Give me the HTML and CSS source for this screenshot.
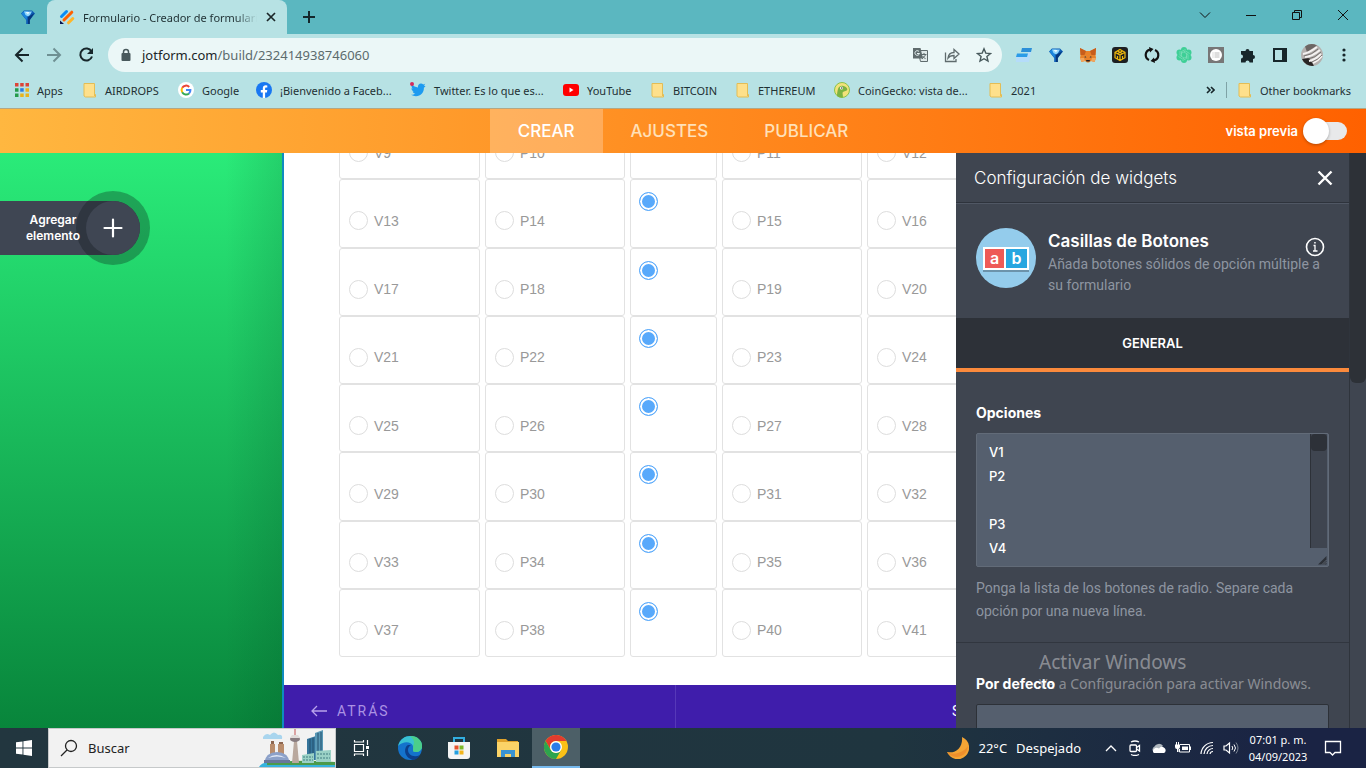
FILE: index.html
```html
<!DOCTYPE html>
<html lang="es">
<head>
  <meta charset="UTF-8">
  <meta name="viewport" content="width=device-width, initial-scale=1.0">
  <title>Formulario - Creador de formularios</title>
  <link rel="stylesheet" href="styles.css">
</head>
<body>
  <svg class="defs" width="0" height="0">
    <symbol id="folder" viewBox="0 0 14 16"><path d="M1 1.500h10.500v10l1 1v2.500H2.500L1 14z" fill="#fee08b" stroke="#e3bd55"/><path d="M11.500 11v3" stroke="#e3bd55"/></symbol>
    <symbol id="gem" viewBox="0 0 16 16">
      <path d="M1 4.500 4 1.500h8l3 3L9.800 11v4H6.200v-4z" fill="#0d5db5"/>
      <path d="M1.500 4.500 4.500 2H8L6.500 11z" fill="#1c86dd"/><path d="M4 2.500h8L10 6 8 7.500 5.500 6z" fill="#8fd6fb"/><path d="M5.500 3h4L8 5.500z" fill="#e6f8ff"/><path d="M8 8l6.500-4L9.800 11v4H8z" fill="#06387c"/>
    </symbol>
  </svg>

  <div class="tabstrip">
    <button class="pinned" aria-label="Pestaña fijada"><svg width="16" height="16"><use href="#gem"/></svg></button>
    <div class="tab">
      <svg width="16" height="16" viewBox="0 0 16 16" stroke-width="3" stroke-linecap="round">
        <path d="M2.500 7.500 7.500 2.500" stroke="#0a8cf5"/>
        <path d="M5 11 12.800 3.200" stroke="#ff6100"/><path d="M9.500 13.800 13.800 9.500" stroke="#ffb629"/>
        <path d="M1 11.500v3.500h4z" fill="#0a1551"/>
      </svg>
      <span class="tab-title">Formulario - Creador de formularios</span>
      <button aria-label="Cerrar pestaña"><svg width="10" height="10" viewBox="0 0 10 10"><path d="M1 1l8 8M9 1l-8 8" stroke="#1b2628" stroke-width="1.700"/></svg></button>
    </div>
    <button class="new-tab" aria-label="Nueva pestaña"><svg width="14" height="14" viewBox="0 0 14 14"><path d="M7 1v12M1 7h12" stroke="#14282c" stroke-width="2"/></svg></button>
    <div class="window-buttons">
      <button aria-label="Buscar pestañas"><svg width="12" height="12" viewBox="0 0 12 12"><path d="M1 3.500l5 5 5-5" fill="none" stroke="#111"/></svg></button>
      <button aria-label="Minimizar"><svg width="12" height="12" viewBox="0 0 12 12"><path d="M1 6.500h10" stroke="#111"/></svg></button>
      <button aria-label="Restaurar"><svg width="12" height="12" viewBox="0 0 12 12"><path d="M1.500 3.500h7v7h-7zM3.500 3.500v-2h7v7h-2" fill="none" stroke="#111"/></svg></button>
      <button aria-label="Cerrar"><svg width="12" height="12" viewBox="0 0 12 12"><path d="M1 1l10 10M11 1L1 11" stroke="#111"/></svg></button>
    </div>
  </div>

  <div class="toolbar">
    <div class="nav-buttons">
      <button aria-label="Atrás"><svg width="16" height="16" viewBox="0 0 16 16"><path d="M15 8H2M8.500 1.500 2 8l6.500 6.500" fill="none" stroke="#17262a" stroke-width="2"/></svg></button>
      <button aria-label="Adelante"><svg width="16" height="16" viewBox="0 0 16 16"><path d="M1 8h13M7.500 1.500 14 8l-6.500 6.500" fill="none" stroke="#6f9093" stroke-width="2"/></svg></button>
      <button aria-label="Recargar"><svg width="16" height="16" viewBox="0 0 16 16"><path d="M13.500 4.500A6 6 0 1 0 14 9.500" fill="none" stroke="#17262a" stroke-width="2"/><path d="M15 1v6H9z" fill="#17262a"/></svg></button>
    </div>
    <div class="omnibox">
      <svg width="12" height="14" viewBox="0 0 12 14"><rect x="1.500" y="5" width="9" height="8" rx="1" fill="#48595c"/><path d="M3.500 5.500V4a2.500 2.500 0 0 1 5 0v1.500" fill="none" stroke="#48595c" stroke-width="1.500"/></svg>
      <span class="url"><b>jotform.com</b>/build/232414938746060</span>
      <button aria-label="Traducir"><svg width="16" height="16" viewBox="0 0 16 16"><path d="M6 3.500h9.500v11h-7z" fill="#dfe9e9" stroke="#5f6b6d"/><path d="M1 1h7.500l2.500 10.500H1z" fill="#5f6b6d"/><path d="M7 4.500A2.300 2.300 0 1 0 7.500 6.500H5" fill="none" stroke="#eaf6f6"/><path d="M9.500 7.500h5M12 6v1.500M13.500 8l-3.500 4M10.500 9l3 3" stroke="#5f6b6d"/></svg></button>
      <button aria-label="Compartir"><svg width="16" height="16" viewBox="0 0 16 16" fill="none" stroke="#5f6b6d" stroke-width="1.300"><path d="M1.500 5.500v9h10.500v-2.500"/><path d="M4 11c.5-4 3-5.500 6-5.500V2.500L15 7l-5 4.500V8.500C7.500 8.500 5.500 9 4 11z"/></svg></button>
      <button aria-label="Favoritos"><svg width="16" height="16" viewBox="0 0 16 16"><path d="M8 1.800l1.800 4.300 4.700.4-3.600 3 1.100 4.600L8 11.700 4 14.100l1.100-4.600-3.600-3 4.700-.4z" fill="none" stroke="#48595c" stroke-width="1.400"/></svg></button>
    </div>
    <div class="extensions">
      <button aria-label="Lector"><svg width="16" height="16" viewBox="0 0 16 16"><path d="M0 10h11l1-5h3l-2 10H0z" fill="#b5dcfa"/><path d="M6 1h10l-1 4H5z" fill="#2b8fd9"/><path d="M1 6.500h11l-1 3.500H0z" fill="#2b9be8"/></svg></button>
      <button aria-label="Gema"><svg width="16" height="16"><use href="#gem"/></svg></button>
      <button aria-label="Billetera"><svg width="18" height="16" viewBox="0 0 18 16"><path d="M1 1l6 3h4l6-3-.5 7 .5 3-1.500 4-3.500-1-2 1.500H8L6 14l-3.500 1L1 11l.5-3z" fill="#e8822a"/><path d="M1 1l6 3-1.500 4h-4zM17 1l-6 3 1.500 4h4z" fill="#c75d1c"/><path d="M6 9l1.500 1.500H5.500zM12 9l-1.500 1.500h2z" fill="#2b3440"/><path d="M7 13h4l-.5 1.500h-3z" fill="#2b2020"/><path d="M1 11l4 0 1 3-3.500 1zM17 11l-4 0-1 3 3.500 1z" fill="#f2a55c"/></svg></button>
      <button aria-label="Cadena"><svg width="16" height="16" viewBox="0 0 16 16"><rect width="16" height="16" rx="3" fill="#1d1f22"/><path d="M8 2.500l5 2.800v5.400l-5 2.800-5-2.800V5.300zM3 5.300l5 2.700 5-2.700M8 8v5.500M5.500 4l5 2.700M10.500 4l-5 2.700M5.500 9v3M10.500 9v3" fill="none" stroke="#efb90b" stroke-width="1.200"/></svg></button>
      <button aria-label="Sincronizar"><svg width="16" height="16" viewBox="0 0 16 16"><path d="M5 13A5.500 5.500 0 0 1 6 2.600M11 3a5.500 5.500 0 0 1-1 10.400" fill="none" stroke="#111" stroke-width="2.200"/><path d="M5 0l4.500 2L6 5.500zM11 16l-4.500-2 3.500-3.500z" fill="#111"/></svg></button>
      <button aria-label="Asistente"><svg width="16" height="16" viewBox="0 0 16 16"><g fill="#3ecf96"><circle cx="8" cy="8" r="6"/><circle cx="8" cy="3" r="3"/><circle cx="12.500" cy="5.500" r="3"/><circle cx="12.500" cy="10.500" r="3"/><circle cx="8" cy="13" r="3"/><circle cx="3.500" cy="10.500" r="3"/><circle cx="3.500" cy="5.500" r="3"/></g><path d="M5.500 9.500v-5l4-2M5 6.500 9.500 4l4 2.500M8 5l4 2.500v5M10.500 6.500v5l-4 2M11 9.500 6.500 12l-4-2.500M8 11 4 8.500V4" fill="none" stroke="#8fe3c2" stroke-width=".6"/></svg></button>
      <button aria-label="Lista"><svg width="16" height="16" viewBox="0 0 16 16"><rect width="16" height="16" fill="#777"/><circle cx="8" cy="8" r="6" fill="#fff"/><path d="M4.500 6h1M6.500 6h5M4.500 8h1M6.500 8h5M4.500 10h1M6.500 10h5" stroke="#bbb"/></svg></button>
      <button aria-label="Extensiones"><svg width="16" height="16" viewBox="0 0 16 16"><path d="M1 4h4.500a2 2 0 1 1 4 0H13v4a2 2 0 1 1 0 4v3.500H9.500a2 2 0 1 0-4 0H1V11.500a2 2 0 1 0 0-4z" fill="#17262a"/></svg></button>
      <button aria-label="Panel lateral"><svg width="14" height="14" viewBox="0 0 14 14"><rect x="1" y="1" width="12" height="12" fill="none" stroke="#17262a" stroke-width="2"/><path d="M9 1h4v12H9z" fill="#17262a"/></svg></button>
      <button aria-label="Perfil"><svg width="22" height="22" viewBox="0 0 22 22"><circle cx="11" cy="11" r="11" fill="#b5b1af"/><path d="M1 15A11 11 0 0 0 13 21.800L8 14z" fill="#292625"/><path d="M4 2.500a11 11 0 0 1 12-1L6 8z" fill="#6c6664"/><path d="M2 10q6-1 14-7M4 13q8-1 15-7M8 17q6-1 12-7M12 19q5-2 9-7" fill="none" stroke="#f4f2f1" stroke-width="2"/><path d="M3 12q8-1 14-7M7 15q7-1 13-7M11 18q6-2 10-7" fill="none" stroke="#5a5452" stroke-width=".7"/></svg></button>
      <button aria-label="Menú"><svg width="4" height="14" viewBox="0 0 4 14" fill="#17262a"><circle cx="2" cy="2" r="1.600"/><circle cx="2" cy="7" r="1.600"/><circle cx="2" cy="12" r="1.600"/></svg></button>
    </div>
  </div>

  <nav class="bookmarks">
    <a href="#"><svg width="14" height="14" viewBox="0 0 14 14"><path d="M0 0h3.500v3.500H0zM5.200 0h3.500v3.500H5.200zM10.500 0H14v3.500h-3.500z" fill="#dc4437"/><path d="M0 5.200h3.500v3.500H0zM0 10.500h3.500V14H0z" fill="#259b4c"/><path d="M5.200 5.200h3.500v3.500H5.200z" fill="#2a7de1"/><path d="M10.500 5.200H14v3.500h-3.500zM10.500 10.500H14V14h-3.500zM5.200 10.500h3.500V14H5.200z" fill="#e8b41c"/></svg>Apps</a>
    <a href="#"><svg width="14" height="16"><use href="#folder"/></svg>AIRDROPS</a>
    <a href="#"><svg width="16" height="16" viewBox="0 0 16 16"><circle cx="8" cy="8" r="8" fill="#fff"/><g fill="none" stroke-width="2"><path d="M4.200 5.800A4.400 4.400 0 0 1 11.200 5" stroke="#ea4335"/><path d="M4.200 10.200a4.400 4.400 0 0 1 0-4.400" stroke="#fbbc05"/><path d="M4.200 10.200a4.400 4.400 0 0 0 6.800 1.200" stroke="#34a853"/><path d="M11 11.400A4.400 4.400 0 0 0 12.400 8H8" stroke="#4285f4"/></g></svg>Google</a>
    <a href="#"><svg width="16" height="16" viewBox="0 0 16 16"><circle cx="8" cy="8" r="8" fill="#1877f2"/><path d="M6.800 16v-5.500H4.800V8h2V6.300c0-2 1.200-3 3-3l1.500.1v2h-1c-1 0-1.200.5-1.200 1.200V8h2.200l-.4 2.500H9.100V16z" fill="#fff"/></svg>¡Bienvenido a Faceb...</a>
    <a href="#"><svg width="16" height="16" viewBox="0 0 16 16"><path d="M15.500 4.200l-1.600 1.500c.2 4.500-3.200 8.500-7.900 8.500-1.800 0-3.500-.5-5-1.400 1.700.1 3.200-.3 4.400-1.300-1.300 0-2.400-.9-2.800-2.100h1.300C2.400 9 1.400 7.700 1.400 6.200l1.400.4C1.500 5.600 1 3.800 1.900 2.300c1.600 1.800 3.600 3 6.100 3.200-.5-2 1-3.900 3-3.900.9 0 1.600.4 2.200.9l2-.7-1.200 1.600z" fill="#1d9bf0"/><circle cx="2" cy="2" r="2" fill="#d62a5c"/></svg>Twitter. Es lo que es...</a>
    <a href="#"><svg width="16" height="12" viewBox="0 0 16 12"><rect width="16" height="12" rx="3" fill="#f00"/><path d="M6.500 3.500v5l4-2.500z" fill="#fff"/></svg>YouTube</a>
    <a href="#"><svg width="14" height="16"><use href="#folder"/></svg>BITCOIN</a>
    <a href="#"><svg width="14" height="16"><use href="#folder"/></svg>ETHEREUM</a>
    <a href="#"><svg width="16" height="16" viewBox="0 0 16 16"><circle cx="8" cy="8" r="7.500" fill="#f3e27a" stroke="#8bc34a"/><path d="M3 14c0-3 .5-5 1-7 .5-2.500 3-4 5.500-3 2 .5 4 2 3.800 3.500-.3 1.700-3.300 1.500-4.300 2.500s0 3 0 5.200A7 7 0 0 1 3 14z" fill="#7cb342"/><circle cx="7.500" cy="6" r="1.500" fill="#fff"/><circle cx="7.700" cy="6" r=".8" fill="#444"/></svg>CoinGecko: vista de...</a>
    <a href="#"><svg width="14" height="16"><use href="#folder"/></svg>2021</a>
    <button class="more" aria-label="Más marcadores"><svg width="9" height="8" viewBox="0 0 9 8"><path d="M1 1l3 3-3 3M5 1l3 3-3 3" fill="none" stroke="#17262a" stroke-width="1.600"/></svg></button>
    <a class="other" href="#"><svg width="14" height="16"><use href="#folder"/></svg>Other bookmarks</a>
  </nav>

  <header class="app-header">
    <nav class="steps">
      <a class="active" href="#">CREAR</a>
      <a href="#">AJUSTES</a>
      <a href="#">PUBLICAR</a>
    </nav>
    <label class="preview">vista previa <input type="checkbox"></label>
  </header>

  <main class="builder">
    <div class="canvas">
      <button class="add-element"><span class="add-text">Agregar elemento</span><span class="add-icon"><svg width="20" height="20" viewBox="0 0 20 20"><path d="M10 1.500v17M1.500 10h17" stroke="#fff" stroke-width="2.200" stroke-linecap="round"/></svg></span></button>
    </div>

    <section class="form-area">
      <div class="form">
        <div class="options">
          <label><input type="radio" name="a1">V9</label>
          <label><input type="radio" name="a1">P10</label>
          <label class="blank"><input type="radio" name="b1" aria-label="vacío" checked></label>
          <label><input type="radio" name="a1">P11</label>
          <label><input type="radio" name="a1">V12</label>

          <label><input type="radio" name="a2">V13</label>
          <label><input type="radio" name="a2">P14</label>
          <label class="blank"><input type="radio" name="b2" aria-label="vacío" checked></label>
          <label><input type="radio" name="a2">P15</label>
          <label><input type="radio" name="a2">V16</label>

          <label><input type="radio" name="a3">V17</label>
          <label><input type="radio" name="a3">P18</label>
          <label class="blank"><input type="radio" name="b3" aria-label="vacío" checked></label>
          <label><input type="radio" name="a3">P19</label>
          <label><input type="radio" name="a3">V20</label>

          <label><input type="radio" name="a4">V21</label>
          <label><input type="radio" name="a4">P22</label>
          <label class="blank"><input type="radio" name="b4" aria-label="vacío" checked></label>
          <label><input type="radio" name="a4">P23</label>
          <label><input type="radio" name="a4">V24</label>

          <label><input type="radio" name="a5">V25</label>
          <label><input type="radio" name="a5">P26</label>
          <label class="blank"><input type="radio" name="b5" aria-label="vacío" checked></label>
          <label><input type="radio" name="a5">P27</label>
          <label><input type="radio" name="a5">V28</label>

          <label><input type="radio" name="a6">V29</label>
          <label><input type="radio" name="a6">P30</label>
          <label class="blank"><input type="radio" name="b6" aria-label="vacío" checked></label>
          <label><input type="radio" name="a6">P31</label>
          <label><input type="radio" name="a6">V32</label>

          <label><input type="radio" name="a7">V33</label>
          <label><input type="radio" name="a7">P34</label>
          <label class="blank"><input type="radio" name="b7" aria-label="vacío" checked></label>
          <label><input type="radio" name="a7">P35</label>
          <label><input type="radio" name="a7">V36</label>

          <label><input type="radio" name="a8">V37</label>
          <label><input type="radio" name="a8">P38</label>
          <label class="blank"><input type="radio" name="b8" aria-label="vacío" checked></label>
          <label><input type="radio" name="a8">P40</label>
          <label><input type="radio" name="a8">V41</label>
        </div>
        <div class="form-footer">
          <button class="back"><svg width="16" height="12" viewBox="0 0 16 12"><path d="M16 6H1M6 1L1 6l5 5" fill="none" stroke="#b9a3ec" stroke-width="1.300"/></svg>ATRÁS</button>
          <button class="next">SIGUIENTE</button>
        </div>
      </div>
    </section>

    <aside class="panel">
      <div class="panel-body">
        <div class="panel-head">
          <h2>Configuración de widgets</h2>
          <button aria-label="Cerrar"><svg width="16" height="16" viewBox="0 0 16 16"><path d="M1.500 1.500l13 13M14.500 1.500l-13 13" stroke="#fff" stroke-width="2.400"/></svg></button>
        </div>
        <div class="widget">
          <div class="widget-icon">
            <span class="a">a</span><span class="b">b</span>
          </div>
          <div class="widget-info">
            <h3>Casillas de Botones</h3>
            <p>Añada botones sólidos de opción múltiple a su formulario</p>
          </div>
          <button aria-label="Información"><svg width="20" height="20" viewBox="0 0 20 20" fill="none" stroke="#fff"><circle cx="10" cy="10" r="8.500" stroke-width="1.600"/><path d="M8.500 8.500H10V14M8 14h4.500" stroke-width="1.300"/><path d="M9.200 5.800h1.500" stroke-width="1.500"/></svg></button>
        </div>
        <button class="general">GENERAL</button>
        <div class="field">
          <label for="opciones">Opciones</label>
          <div class="text-box">
            <textarea id="opciones">V1
P2

P3
V4
V5
P6

P7
V8
V9
P10

P11
V12
V13
P14

P15
V16
V17
P18

P19
V20</textarea>
            <div class="text-scroll">
              <div class="text-track"><div class="text-thumb"></div></div>
              <svg width="9" height="9" viewBox="0 0 9 9"><path d="M8.500 0v8.500H0z" fill="#2d3138"/><path d="M4 8.500 8.500 4M6 8.500l2.500-2.500" stroke="#7d8795" stroke-width=".6"/></svg>
            </div>
          </div>
          <p>Ponga la lista de los botones de radio. Separe cada opción por una nueva línea.</p>
        </div>
        <div class="field">
          <label for="defecto">Por defecto</label>
          <input id="defecto" type="text">
        </div>
      </div>
      <div class="panel-scroll"><div class="panel-thumb"></div></div>
    </aside>
  </main>

  <footer class="taskbar">
    <button class="start" aria-label="Inicio"><svg width="16" height="16" viewBox="0 0 16 16" fill="#fff"><path d="M0 2.300l6.500-.9v6.200H0zM7.400 1.300 16 0v7.600H7.400zM0 8.400h6.500v6.200L0 13.700zM7.400 8.400H16V16l-8.600-1.200z"/></svg></button>
    <label class="search">
      <svg width="18" height="18" viewBox="0 0 18 18"><circle cx="11" cy="7" r="5.500" fill="none" stroke="#222" stroke-width="1.300"/><path d="M7 11l-6 6" stroke="#222" stroke-width="1.300"/></svg>
      <input type="text" placeholder="Buscar" aria-label="Buscar">
      <svg class="city" width="78" height="38" viewBox="0 0 78 38">
        <path d="M6 8q3-5 7-2 4-5 8 0 5-1 4 4H6z" fill="#a9d5ee"/>
        <path d="M2 38q2-4 9-5h67v5z" fill="#35b3dd"/><path d="M10 34q30-4 68-1v3H10z" fill="#4c9a4a"/>
        <path d="M13 15h5v14h-5zM21 15h6v14h-6z" fill="#b98d6d"/><path d="M14 12h3v3h-3zM22 13h4v2h-4z" fill="#8c6650"/>
        <path d="M7 34q2-11 13-11t13 11z" fill="#8ca1c9"/><path d="M11 29q8-6 18 0-9-3-18 0z" fill="#e1e9f7"/><path d="M7 31h26v3H7z" fill="#68779b"/>
        <path d="M35 34l2-22h3l2 22z" fill="#b9a89e"/><ellipse cx="38" cy="10" rx="5" ry="3" fill="#887c80"/><path d="M33 9h10l-2-3h-6z" fill="#e0dbd9"/><path d="M38 0v6" stroke="#c45454"/>
        <path d="M50 10l9-3v24h-9z" fill="#36759b"/><path d="M58 4l8-3v30h-8z" fill="#5897b5"/><path d="M53 10v20M56 9v20M61 4v26M64 3v26" stroke="#23506f"/>
        <path d="M45 26l12-2v10H45zM59 22l15-1v12H59z" fill="#9ad1c5"/><path d="M46 28h10M46 31h10M60 25h13M60 29h13" stroke="#427e82" stroke-dasharray="2 1"/>
      </svg>
    </label>
    <button aria-label="Vista de tareas"><svg width="18" height="18" viewBox="0 0 18 18" fill="none" stroke="#fff" stroke-width="1.200"><path d="M2.500 5.500h9v7h-9zM2.500 1v2h9V1M2.500 17v-2h9v2M15.500 1v5M15.500 11v6"/><path d="M15.500 7v3" stroke-width="3"/></svg></button>
    <button aria-label="Edge"><svg width="24" height="24" viewBox="0 0 24 24"><circle cx="12" cy="12" r="12" fill="#1473cc"/><path d="M0 10C2 3 7 0 12 0c8 0 12 5 12 10 0 4-3 6-6 6-5 0-2-3-3-6-2-5-10-5-15 0z" fill="#39c1d2"/><path d="M12 0c8 0 12 5 12 10 0 4-3 6-6 6-5 0-2-3-3-6 2-3 1-7-3-10z" fill="#4bce8a"/><path d="M10 9c-4 2-5 12 5 15 3 0 6-3 7-5-6 3-12 0-12-5 0-2 1-4 3-5z" fill="#0c3f8b"/></svg></button>
    <button aria-label="Tienda"><svg width="24" height="24" viewBox="0 0 24 24"><path d="M7 6V2h10v4" fill="none" stroke="#32aee0" stroke-width="2"/><path d="M1 6h22v14a3 3 0 0 1-3 3H4a3 3 0 0 1-3-3z" fill="#f4f4f4"/><path d="M7.500 9.500h4v4h-4z" fill="#e5532d"/><path d="M12.500 9.500h4v4h-4z" fill="#7db928"/><path d="M7.500 14.500h4v4h-4z" fill="#239fe0"/><path d="M12.500 14.500h4v4h-4z" fill="#f3b51b"/></svg></button>
    <button aria-label="Explorador"><svg width="24" height="24" viewBox="0 0 24 24"><path d="M1 3h9l2 2h10v4H1z" fill="#e0a22a"/><path d="M1 6h22v15H1z" fill="#fbd367"/><path d="M5 21v-7h14v7h-4v-3H9v3z" fill="#3a93d2"/></svg></button>
    <button class="open" aria-label="Chrome"><svg width="24" height="24" viewBox="0 0 24 24"><circle cx="12" cy="12" r="12" fill="#fbc117"/><path d="M1.600 6A12 12 0 0 1 22.400 6H12a6 6 0 0 0-5.200 9z" fill="#e33b2e"/><path d="M1.600 6A12 12 0 0 0 12 24l5.200-9A6 6 0 0 1 6.800 15z" fill="#2da44e"/><circle cx="12" cy="12" r="6" fill="#fff"/><circle cx="12" cy="12" r="4.600" fill="#2b7de9"/></svg></button>

    <div class="tray">
      <button class="weather"><svg width="22" height="22" viewBox="0 0 22 22"><path d="M15 0a11.500 11.500 0 1 1-15 15C9 17 16 10 15 0z" fill="#f4a535"/><path d="M0 15c8 4 17 0 21-6a11.500 11.500 0 0 1-21 6z" fill="#ee8f2c"/></svg><span>22°C</span><span>Despejado</span></button>
      <button aria-label="Mostrar iconos ocultos"><svg width="12" height="8" viewBox="0 0 12 8"><path d="M1 7l5-5 5 5" fill="none" stroke="#fff" stroke-width="1.300"/></svg></button>
      <button aria-label="Cámara"><svg width="14" height="16" viewBox="0 0 14 16" fill="none" stroke="#fff" stroke-width="1.300"><rect x="2" y="5" width="6.500" height="6.500" rx="1"/><path d="M8.500 7.500l3-2v5.500l-3-2M3 2q4-2 8 0M3 14.500q4 2 8 0"/></svg></button>
      <button aria-label="Nube"><svg width="16" height="12" viewBox="0 0 16 12"><path d="M4 11a3.500 3.500 0 0 1-.5-6.500A5 5 0 0 1 12 4z" fill="#aeb6bd"/><path d="M3 11a2.500 2.500 0 0 1 0-4q2-2 5-.5 2-3 5.500-.5A3 3 0 0 1 13 11z" fill="#fff"/></svg></button>
      <button aria-label="Batería"><svg width="16" height="14" viewBox="0 0 16 14"><path d="M5 3.500h9.500v7.500H4.500V8" fill="none" stroke="#fff"/><path d="M7 5.500h6V9H7zM15 5.500h1v3.500h-1zM0 3.500h5V6a2 2 0 0 1-1.500 2v3H2V8A2 2 0 0 1 0 6zM1 1h1v3H1zM3 1h1v3H3z" fill="#fff"/></svg></button>
      <button class="wifi" aria-label="Red"><svg width="14" height="14" viewBox="0 0 14 14" fill="none" stroke="#fff" stroke-width="1.200"><path d="M1 13A12 12 0 0 1 13 1.500M4 13a9 9 0 0 1 9-8.500M7 13a6 6 0 0 1 6-5.500M10 13a3 3 0 0 1 3-2.500"/></svg></button>
      <button aria-label="Volumen"><svg width="16" height="14" viewBox="0 0 16 14" fill="none" stroke="#fff"><path d="M1 5v4h2l3.500 3V2L3 5z" stroke-width="1.200"/><path d="M9 5q1.500 2 0 4M11 3.500q3 3.500 0 7"/><path d="M13 1.500q4 5.500 0 11" stroke="#7d8795"/></svg></button>
      <div class="clock"><span>07:01 p. m.</span><span>04/09/2023</span></div>
      <button class="notify" aria-label="Notificaciones"><svg width="18" height="18" viewBox="0 0 18 18"><path d="M1.500 2.500h15v11H11l-2.500 2.500L6 13.500H1.500z" fill="none" stroke="#fff" stroke-width="1.300"/></svg></button>
    </div>
  </footer>

  <div class="watermark">
    <strong>Activar Windows</strong>
    <span>Ve a Configuración para activar Windows.</span>
  </div>
</body>
</html>
```

FILE: styles.css
```css
* {
  margin: 0;
  padding: 0;
  box-sizing: border-box;
}
body {
  display: flex;
  flex-direction: column;
  height: 100vh;
  overflow: hidden;
  font-family: 'Noto Sans', sans-serif;
  font-size: 11px;
  color: #1f3033;
}
button {
  display: flex;
  align-items: center;
  justify-content: center;
  flex: none;
  border: none;
  background: none;
  color: inherit;
  font: inherit;
  cursor: pointer;
}
a {
  color: inherit;
  text-decoration: none;
}
svg {
  flex: none;
}
.defs {
  position: absolute;
}

/* browser */
.tabstrip {
  display: flex;
  flex: none;
  height: 34px;
  background: #5bb7c0;
}
.pinned {
  width: 47px;
  padding-left: 9px;
}
.tab {
  display: flex;
  align-items: center;
  width: 240px;
  padding: 0 10px 0 12px;
  gap: 8px;
  background: #b7e2e4;
  border-radius: 8px 8px 0 0;
}
.tab-title {
  flex: 1;
  overflow: hidden;
  white-space: nowrap;
  -webkit-mask-image: linear-gradient(to right, #000 88%, transparent);
  mask-image: linear-gradient(to right, #000 88%, transparent);
}
.tab button {
  width: 12px;
}
.new-tab {
  width: 44px;
}
.window-buttons {
  display: flex;
  margin-left: auto;
  height: 29px;
}
.window-buttons button {
  width: 46px;
}
.toolbar {
  display: flex;
  align-items: center;
  flex: none;
  height: 42px;
  padding-right: 6px;
  background: #b7e2e4;
}
.nav-buttons {
  display: flex;
  padding: 0 6px;
}
.nav-buttons button {
  width: 32px;
}
.omnibox {
  display: flex;
  align-items: center;
  flex: 1;
  height: 34px;
  padding: 0 9px 0 12px;
  border-radius: 17px;
  background: #ebf7f7;
  font-size: 13px;
}
.url {
  flex: 1;
  margin-left: 10px;
  color: #5c6b6d;
}
.url b {
  font-weight: normal;
  color: #1b2527;
}
.omnibox button {
  width: 32px;
}
.omnibox button:last-child {
  width: 18px;
  margin-left: 7px;
}
.extensions {
  display: flex;
  padding-left: 6px;
}
.extensions button {
  width: 32px;
  height: 32px;
}
.bookmarks {
  display: grid;
  grid-template-columns: 68px 95px 78px 154px 153px 88px 85px 98px 155px 1fr auto auto;
  align-items: center;
  flex: none;
  height: 33px;
  padding: 0 15px 4px 15px;
  background: #b7e2e4;
  border-bottom: 1px solid #b3a785;
}
.bookmarks a {
  display: flex;
  align-items: center;
  gap: 8px;
  white-space: nowrap;
}
.bookmarks .more {
  width: 25px;
  height: 16px;
  border-right: 1px solid #7fa3a6;
  padding-right: 6px;
}
.bookmarks .other {
  padding-left: 11px;
}

/* app header */
.app-header {
  display: grid;
  grid-template-columns: 1fr auto 1fr;
  flex: none;
  height: 44px;
  background: linear-gradient(to right, #ffb740, #ff6100);
  font-family: 'Inter', sans-serif;
}
.steps {
  display: flex;
  grid-column: 2;
}
.steps a {
  display: flex;
  align-items: center;
  padding: 0 28px;
  font-size: 17px;
  font-weight: 500;
  color: #ffe0b8;
}
.steps .active {
  background: rgba(255, 255, 255, 0.25);
  color: #fff;
}
.preview {
  display: flex;
  align-items: center;
  justify-self: end;
  gap: 8px;
  padding-right: 19px;
  font-size: 13px;
  font-weight: 600;
  color: #fff;
}
.preview input {
  display: flex;
  align-items: center;
  appearance: none;
  width: 41px;
  height: 18px;
  border-radius: 9px;
  background: #e8e9ea;
}
.preview input::before {
  content: '';
  flex: none;
  width: 26px;
  height: 26px;
  margin-left: -3px;
  border-radius: 50%;
  background: #fff;
  box-shadow: 0 1px 3px rgba(0, 0, 0, 0.3);
}

/* builder */
.builder {
  display: flex;
  flex: 1;
  min-height: 0;
}
.canvas {
  flex: none;
  width: 282px;
  padding-top: 48px;
  background: linear-gradient(to right, transparent 80%, rgba(0, 60, 30, 0.15)), linear-gradient(#2aeb79, #08853b);
}
.add-element {
  height: 54px;
  padding-left: 20px;
  border-radius: 0 27px 27px 0;
  background: #3f4653;
  color: #fff;
  font-family: 'Inter', sans-serif;
  font-size: 12px;
  font-weight: 600;
  line-height: 16px;
}
.add-text {
  width: 66px;
  z-index: 1;
}
.add-icon {
  display: flex;
  align-items: center;
  justify-content: center;
  width: 54px;
  height: 54px;
  border-radius: 50%;
  background: #3f4653;
  box-shadow: 0 0 0 10px rgba(10, 20, 20, 0.3);
}
.form-area {
  flex: 1;
  min-width: 0;
  overflow: hidden;
  border-left: 2px solid #0f8bc0;
  background: #fff;
}
.form {
  width: 782px;
}
.options {
  display: grid;
  grid-template-columns: 141px 140px 87px 140px 141px;
  grid-auto-rows: 1fr;
  column-gap: 5px;
  height: 546px;
  margin: -42px 0 28px 55px;
  font-family: 'Liberation Sans', sans-serif;
  font-size: 14px;
  color: #999;
}
.options label {
  display: flex;
  align-items: center;
  gap: 6px;
  padding: 15px 0 0 9px;
  border: 1px solid #e2e2e2;
  border-radius: 3px;
}
.options .blank {
  align-items: flex-start;
  padding: 12px 0 0 8px;
}
.options input {
  appearance: none;
  width: 19px;
  height: 19px;
  border: 1px solid #ddd;
  border-radius: 50%;
  background: #fff;
}
.options input:checked {
  border-color: #58a9fb;
  background: #58a9fb;
  box-shadow: inset 0 0 0 2px #fff;
}
.form-footer {
  display: flex;
  height: 52px;
  background: #3f1dab;
  font-family: 'Roboto', sans-serif;
  font-size: 14px;
}
.form-footer button {
  letter-spacing: 2px;
}
.form-footer .back {
  width: 392px;
  justify-content: flex-start;
  gap: 10px;
  padding-left: 27px;
  border-right: 1px solid #5638b8;
  color: #ab92e4;
}
.form-footer .next {
  padding-left: 276px;
  color: #fff;
}

/* settings panel */
.panel {
  display: flex;
  flex: none;
  width: 410px;
  overflow: hidden;
  background: #3f4550;
  color: #fff;
  font-family: 'Inter', sans-serif;
}
.panel-body {
  flex: 1;
  min-width: 0;
}
.panel-scroll {
  flex: none;
  width: 17px;
  border-left: 1px solid #2f343c;
}
.panel-thumb {
  height: 40%;
  border-radius: 0 0 6px 6px;
  background: #2d3137;
}
.panel-head {
  display: flex;
  align-items: center;
  justify-content: space-between;
  height: 50px;
  padding: 0 16px 0 18px;
  border-bottom: 1px solid #2e333c;
}
.panel-head h2 {
  font-size: 17px;
  font-weight: 300;
}
.widget {
  display: flex;
  align-items: flex-start;
  height: 115px;
  padding: 24px 24px 0 20px;
  border-top: 1px solid #505764;
}
.widget-icon {
  display: flex;
  align-items: center;
  justify-content: center;
  flex: none;
  width: 60px;
  height: 60px;
  margin-right: 12px;
  border-radius: 50%;
  background: #94ccec;
  font-size: 16px;
  font-weight: 600;
  line-height: 19px;
  text-align: center;
}
.widget-icon span {
  width: 23px;
  border: 2px solid #fff;
  box-shadow: 0 2px 0 #6c93ab;
}
.widget-icon .a {
  background: linear-gradient(45deg, transparent 75%, #ee5a56 75%) 0 100% / 0 0 no-repeat, #ee5a56;
}
.widget-icon .b {
  border-left: none;
  background: #27a6e0;
}
.widget-info {
  flex: 1;
  min-width: 0;
}
.widget-info h3 {
  font-size: 17px;
  font-weight: 600;
  line-height: 26px;
}
.widget-info p {
  width: 285px;
  font-family: 'Roboto', sans-serif;
  font-size: 14px;
  line-height: 21px;
  color: #8e95a1;
}
.widget button {
  margin-top: 9px;
}
.general {
  width: 100%;
  height: 54px;
  border-bottom: 4px solid #fb8a3c;
  background: #2d3138;
  font-size: 13px;
  font-weight: 600;
}
.field {
  padding: 30px 20px 19px;
  border-bottom: 1px solid #31363f;
}
.field label {
  display: block;
  font-size: 14px;
  font-weight: 700;
  line-height: 22px;
}
.text-box {
  display: flex;
  height: 134px;
  margin: 9px 0 10px;
  border: 1px solid #626b78;
  border-radius: 2px;
  background: #555f6e;
}
.text-box textarea {
  flex: 1;
  min-width: 0;
  padding: 6px 12px;
  border: none;
  background: none;
  color: #fff;
  font-family: inherit;
  font-size: 13px;
  font-weight: 500;
  line-height: 24px;
  resize: none;
}
.text-scroll {
  display: flex;
  flex-direction: column;
  align-items: flex-end;
  width: 18px;
  padding: 0 1px 1px 0;
}
.text-track {
  flex: 1;
  width: 100%;
  margin-bottom: 8px;
  border-left: 1px solid #2d3138;
  background: #3f4550;
}
.text-thumb {
  height: 17px;
  border-radius: 4px;
  background: #2d3138;
}
.field p {
  font-family: 'Roboto', sans-serif;
  font-size: 14px;
  line-height: 23px;
  color: #8e95a1;
}
.field input {
  display: block;
  width: 100%;
  height: 40px;
  margin-top: 9px;
  border: 1px solid #2d3138;
  border-radius: 2px;
  background: #555f6e;
}

/* taskbar */
.taskbar {
  display: flex;
  flex: none;
  height: 40px;
  background: linear-gradient(to right, #22363f, #1f353f 65%, #1a2344 95%);
  color: #fff;
}
.taskbar > button {
  width: 49px;
}
.taskbar .start {
  width: 48px;
}
.taskbar .open {
  width: 48px;
  background: #4c5f67;
  border-bottom: 2px solid #76b9ed;
}
.search {
  display: flex;
  align-items: center;
  width: 288px;
  padding-left: 11px;
  border: 1px solid #c6c9ca;
  background: #f2f2f2;
}
.search input {
  flex: 1;
  min-width: 0;
  margin-left: 10px;
  border: none;
  background: none;
  font: inherit;
  font-size: 13px;
}
.search input::placeholder {
  color: #222;
}
.tray {
  display: flex;
  margin-left: auto;
  padding-right: 17px;
}
.tray button {
  width: 24px;
}
.tray .weather {
  width: auto;
  gap: 9px;
  margin-right: 18px;
  font-size: 13px;
}
.clock {
  display: flex;
  flex-direction: column;
  justify-content: center;
  width: 70px;
  text-align: center;
  line-height: 17px;
  white-space: nowrap;
}
.tray .notify {
  width: 32px;
  margin-left: 4px;
}
.watermark {
  position: absolute;
  right: 55px;
  bottom: 73px;
  display: flex;
  flex-direction: column;
  color: rgba(255, 255, 255, 0.4);
  font-size: 14px;
  line-height: 22px;
  pointer-events: none;
}
.watermark strong {
  font-size: 19px;
  font-weight: 400;
}
```
